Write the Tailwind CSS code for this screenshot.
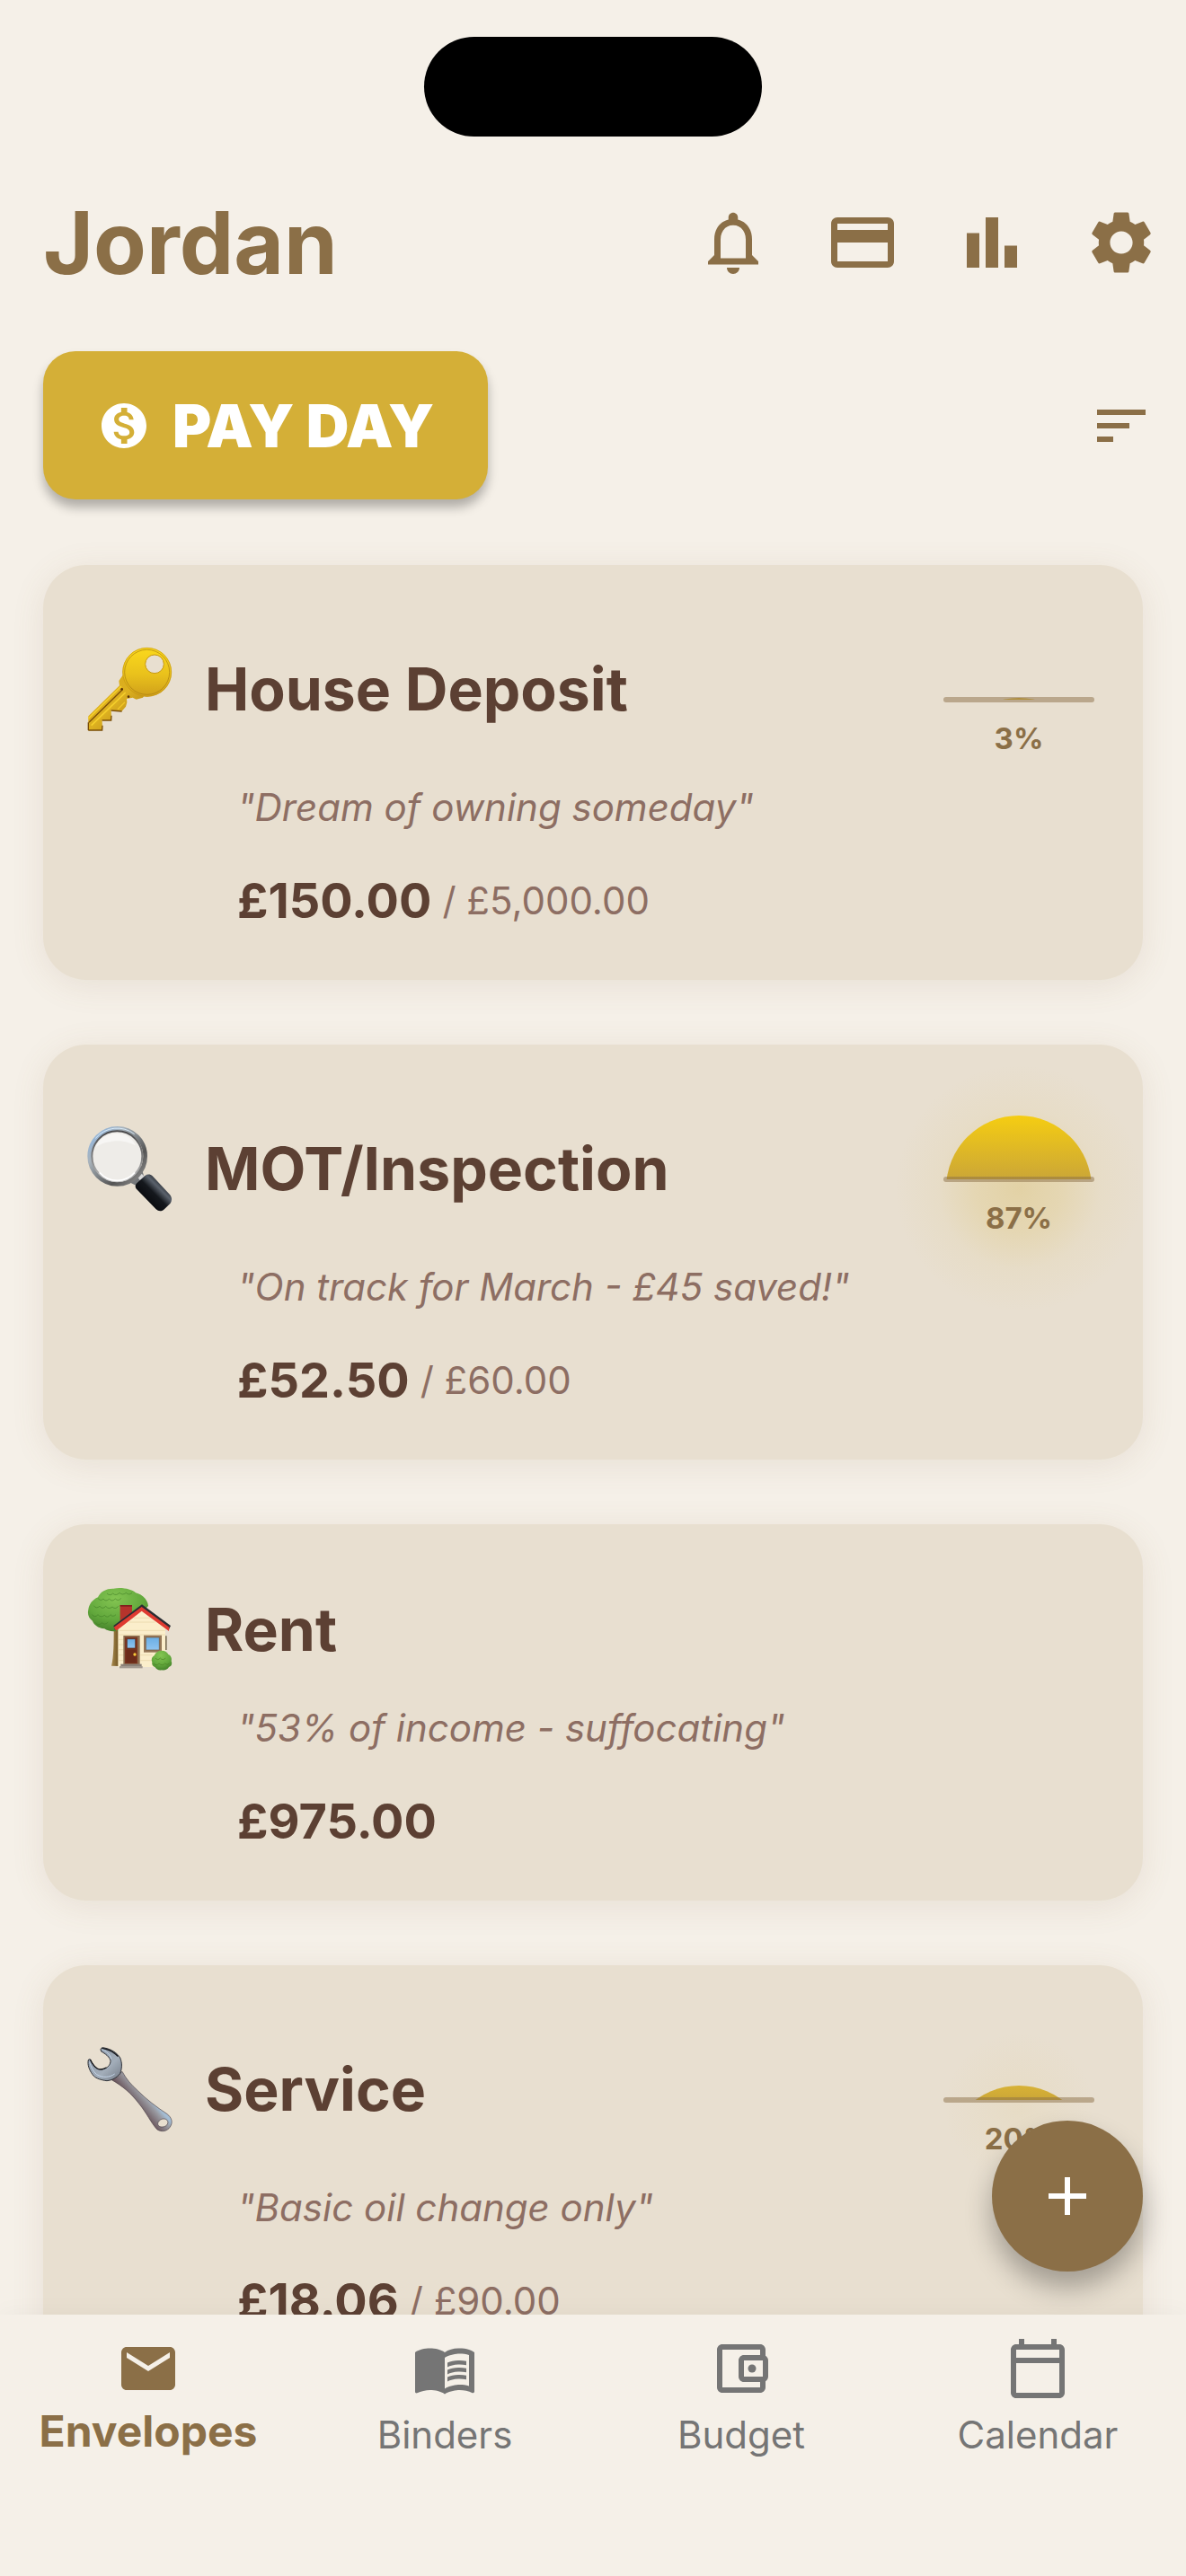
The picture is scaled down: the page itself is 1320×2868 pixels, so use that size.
<!DOCTYPE html>
<html lang="en">
<head>
  <meta charset="UTF-8">
  <meta name="viewport" content="width=device-width, initial-scale=1.0">
  <title>Envelopes</title>
  <script src="https://cdn.jsdelivr.net/npm/@tailwindcss/browser@4"></script>
</head>
<body class="h-screen flex flex-col overflow-hidden bg-[#f5f0e8] font-['Inter',sans-serif] text-[#5c4033]">

  <!-- Scrolling content -->
  <div class="relative flex-1 min-h-0">
    <div class="h-full overflow-hidden pt-[41px]">
      <div class="mx-auto w-[376px] h-[111px] rounded-full bg-black"></div>

      <!-- Header -->
      <header class="mt-[46px] pl-12 flex items-center justify-between text-[#8b6f47]">
        <h1 class="text-[96px] leading-[120px] font-bold">Jordan</h1>
        <div class="flex">
          <button type="button" aria-label="Notifications" class="size-36 flex items-center justify-center">
            <svg class="size-[84px]" viewBox="0 0 24 24" fill="currentColor"><path d="M12 22c1.1 0 2-.9 2-2h-4c0 1.1.9 2 2 2zm6-6v-5c0-3.07-1.63-5.64-4.5-6.32V4c0-.83-.67-1.5-1.5-1.5s-1.5.67-1.5 1.5v.68C7.64 5.36 6 7.92 6 11v5l-2 2v1h16v-1l-2-2zm-2 1H8v-6c0-2.48 1.51-4.5 4-4.5s4 2.02 4 4.5v6z"/></svg>
          </button>
          <button type="button" aria-label="Accounts" class="size-36 flex items-center justify-center">
            <svg class="size-[84px]" viewBox="0 0 24 24" fill="currentColor"><path d="M20 4H4c-1.11 0-1.99.89-1.99 2L2 18c0 1.11.89 2 2 2h16c1.11 0 2-.89 2-2V6c0-1.11-.89-2-2-2zm0 14H4v-6h16v6zm0-10H4V6h16v2z"/></svg>
          </button>
          <button type="button" aria-label="Statistics" class="size-36 flex items-center justify-center">
            <svg class="size-[84px]" viewBox="0 0 24 24" fill="currentColor"><path d="M4 9h4v11H4zm12 4h4v7h-4zm-6-9h4v16h-4z"/></svg>
          </button>
          <button type="button" aria-label="Settings" class="size-36 flex items-center justify-center">
            <svg class="size-[84px]" viewBox="0 0 24 24" fill="currentColor"><path d="M19.14 12.94c.04-.3.06-.61.06-.94 0-.32-.02-.64-.07-.94l2.03-1.58c.18-.14.23-.41.12-.61l-1.92-3.32c-.12-.22-.37-.29-.59-.22l-2.39.96c-.5-.38-1.03-.7-1.62-.94l-.36-2.54c-.04-.24-.24-.41-.48-.41h-3.84c-.24 0-.43.17-.47.41l-.36 2.54c-.59.24-1.13.57-1.62.94l-2.39-.96c-.22-.08-.47 0-.59.22L2.74 8.87c-.12.21-.08.47.12.61l2.03 1.58c-.05.3-.09.63-.09.94s.02.64.07.94l-2.03 1.58c-.18.14-.23.41-.12.61l1.92 3.32c.12.22.37.29.59.22l2.39-.96c.5.38 1.03.7 1.62.94l.36 2.54c.05.24.24.41.48.41h3.84c.24 0 .44-.17.47-.41l.36-2.54c.59-.24 1.13-.56 1.62-.94l2.39.96c.22.08.47 0 .59-.22l1.92-3.32c.12-.22.07-.47-.12-.61l-2.01-1.58zM12 15.6c-1.98 0-3.6-1.62-3.6-3.6s1.62-3.6 3.6-3.6 3.6 1.62 3.6 3.6-1.62 3.6-3.6 3.6z"/></svg>
          </button>
        </div>
      </header>

      <!-- Actions -->
      <div class="mt-[49px] pl-12 flex items-center justify-between">
        <button type="button" class="flex items-center gap-6 h-[165px] px-[60px] rounded-[36px] bg-[#d4af37] text-white text-[66px] leading-[80px] font-black shadow-[0_9px_12px_rgba(0,0,0,0.28)]">
          <svg class="size-[60px]" viewBox="0 0 24 24" fill="currentColor"><path d="M12 2C6.48 2 2 6.48 2 12s4.48 10 10 10 10-4.48 10-10S17.52 2 12 2zm1.41 16.09V20h-2.67v-1.93c-1.71-.36-3.16-1.46-3.27-3.4h1.96c.1 1.05.82 1.87 2.65 1.87 1.96 0 2.4-.98 2.4-1.59 0-.83-.44-1.61-2.67-2.14-2.48-.6-4.18-1.62-4.18-3.67 0-1.72 1.39-2.84 3.11-3.21V4h2.67v1.95c1.86.45 2.79 1.86 2.85 3.39H14.3c-.05-1.11-.64-1.87-2.22-1.87-1.5 0-2.4.68-2.4 1.64 0 .84.65 1.39 2.67 1.94s4.18 1.36 4.18 3.83c-.02 1.81-1.38 2.83-3.12 3.19z"/></svg>
          PAY DAY
        </button>
        <button type="button" aria-label="Sort" class="size-36 flex items-center justify-center text-[#8b6f47]">
          <svg class="size-[72px]" viewBox="0 0 24 24" fill="currentColor"><path d="M3 18h6v-2H3v2zM3 6v2h18V6H3zm0 7h12v-2H3v2z"/></svg>
        </button>
      </div>

      <!-- Envelope list -->
      <ul class="mt-[73px] px-12 flex flex-col gap-[72px]">
        <li class="pt-12 pl-12 pr-[54px] pb-14 rounded-[48px] bg-[#e8dfd0] shadow-[0_6px_36px_rgba(139,111,71,0.12)]">
          <div class="flex items-center gap-9 min-h-[180px]">
            <svg class="size-24" viewBox="81 84 288 288">
              <defs>
                <linearGradient id="keyHead" x1="0" y1="0" x2="0" y2="1"><stop offset="0" stop-color="#fbd91c"/><stop offset=".55" stop-color="#e9c11c"/><stop offset="1" stop-color="#cf9f1a"/></linearGradient>
                <linearGradient id="keyShaft" x1="0" y1="0" x2="1" y2="1"><stop offset="0" stop-color="#d9a818"/><stop offset=".5" stop-color="#dcb020"/><stop offset="1" stop-color="#a87812"/></linearGradient>
              </defs>
              <path fill="url(#keyShaft)" d="M88 319 192 217l-2-16 14-20 70 70-4 6-22 6-12-6-20 4 1 12-4 14-13 15-36-3 1 34h-31l1 33-47 1z"/>
              <path stroke="#7a4d08" stroke-width="4" fill="none" d="m90 340 112-110"/>
              <path stroke="#f5d02c" stroke-width="5" fill="none" d="m88 327 110-108M98 350 212 240"/>
              <path stroke="#7a4d08" stroke-width="4" fill="none" d="M88 366h46l1-16M134 333h30l1-16M164 300l36 3M88 340v26"/>
              <path stroke="#f0c728" stroke-width="4" fill="none" d="m186 296 24-24"/>
              <path fill="url(#keyHead)" fill-rule="evenodd" d="M284 90a82 82 0 1 1 0 164 82 82 0 0 1 0-164zm25 24a31 31 0 1 0 0 62 31 31 0 0 0 0-62z"/>
              <circle cx="284" cy="172" r="75" fill="none" stroke="#a97d10" stroke-width="2"/>
              <circle cx="284" cy="172" r="81" fill="none" stroke="#c3920f" stroke-width="2"/>
              <circle cx="309" cy="145" r="31" fill="none" stroke="#c8980e" stroke-width="3"/>
              <circle cx="200" cy="229" r="4" fill="#5a3205"/><circle cx="222" cy="254" r="4" fill="#5a3205"/>
            </svg>
            <h2 class="flex-1 text-[66px] leading-[80px] font-bold">House Deposit</h2>
            <div class="w-[168px] flex flex-col items-center gap-5">
              <svg class="w-[168px] h-[90px] overflow-visible" viewBox="0 0 168 90">
                <defs><clipPath id="sky3"><path d="M-84-84h336V87H-84z"/></clipPath></defs>
                <circle cx="84" cy="166" r="81" fill="#d4af37" clip-path="url(#sky3)"/>
                <rect y="84" width="168" height="6" rx="3" fill="#8b6f47" fill-opacity=".5"/>
              </svg>
              <span class="text-[33px] leading-[40px] font-bold text-[#8b6f47]">3%</span>
            </div>
          </div>
          <p class="mt-[18px] pl-[168px] text-[42px] leading-[48px] italic text-[#8d6e63]">"Dream of owning someday"</p>
          <p class="mt-12 pl-[168px] flex items-center gap-3 leading-[64px]"><span class="text-[54px] font-bold">£150.00</span><span class="text-[42px] text-[#8d6e63]">/ £5,000.00</span></p>
        </li>

        <li class="pt-12 pl-12 pr-[54px] pb-14 rounded-[48px] bg-[#e8dfd0] shadow-[0_6px_36px_rgba(139,111,71,0.12)]">
          <div class="flex items-center gap-9 min-h-[180px]">
            <svg class="size-24" viewBox="81 95 288 288">
              <defs>
                <linearGradient id="rim" x1="0" y1="0" x2="1" y2="1"><stop offset="0" stop-color="#8ab8ea"/><stop offset=".3" stop-color="#a9b3bb"/><stop offset=".7" stop-color="#555"/><stop offset="1" stop-color="#9a9a9a"/></linearGradient>
                <linearGradient id="rimInner" x1="0" y1="0" x2="0" y2="1"><stop offset="0" stop-color="#4a4a4c"/><stop offset=".6" stop-color="#888"/><stop offset="1" stop-color="#c8c8c8"/></linearGradient>
                <linearGradient id="grip" x1="0" y1="1" x2="1" y2="0"><stop offset=".25" stop-color="#08090d"/><stop offset=".5" stop-color="#15181d"/><stop offset=".64" stop-color="#5b626c"/><stop offset=".8" stop-color="#15171c"/></linearGradient>
              </defs>
              <path fill="#74777a" d="m216 280 48-48 10 34-26 30z"/>
              <path fill="#dadada" d="m254 270 12-14 10 10-14 14z"/>
              <circle cx="185" cy="198" r="93" fill="none" stroke="url(#rim)" stroke-width="14"/>
              <circle cx="184" cy="198" r="84" fill="#eeece8" stroke="url(#rimInner)" stroke-width="6"/>
              <path fill="#f7f6f4" d="M112 168c16-36 44-46 72-46s50 14 62 40c-30-14-52-18-78-14-24 3-40 9-56 20z"/>
              <path fill="none" stroke="#fff" stroke-width="5" d="M125 252a78 78 0 0 0 118 0"/>
              <path fill="none" stroke="#d8eaf8" stroke-width="3" d="M112 138a94 94 0 0 1 130-14"/>
              <path fill="url(#grip)" d="M277 263c8-6 18-6 25 1l58 62c8 10 8 20 2 29l-22 21c-9 7-18 6-26-1l-64-66c-7-7-6-15 0-21z"/>
            </svg>
            <h2 class="flex-1 text-[66px] leading-[80px] font-bold">MOT/Inspection</h2>
            <div class="w-[168px] flex flex-col items-center gap-5">
              <svg class="w-[168px] h-[90px] overflow-visible" viewBox="0 0 168 90">
                <defs>
                  <clipPath id="sky87"><path d="M-84-84h336V87H-84z"/></clipPath>
                  <linearGradient id="sun87" gradientUnits="userSpaceOnUse" x1="0" y1="16" x2="0" y2="87"><stop offset="0" stop-color="#f5cd12"/><stop offset="1" stop-color="#cba637"/></linearGradient>
                  <radialGradient id="glow87"><stop offset="0" stop-color="#d4af37" stop-opacity=".28"/><stop offset=".35" stop-color="#d8b53f" stop-opacity=".2"/><stop offset=".65" stop-color="#d8b53f" stop-opacity=".06"/><stop offset="1" stop-color="#d8b53f" stop-opacity="0"/></radialGradient>
                </defs>
                <circle cx="84" cy="97" r="138" fill="url(#glow87)"/>
                <circle cx="84" cy="97" r="81" fill="url(#sun87)" clip-path="url(#sky87)"/>
                <rect y="84" width="168" height="6" rx="3" fill="#8b6f47" fill-opacity=".5"/>
              </svg>
              <span class="relative text-[33px] leading-[40px] font-bold text-[#8b6f47]">87%</span>
            </div>
          </div>
          <p class="mt-[18px] pl-[168px] text-[42px] leading-[48px] italic text-[#8d6e63]">"On track for March - £45 saved!"</p>
          <p class="mt-12 pl-[168px] flex items-center gap-3 leading-[64px]"><span class="text-[54px] font-bold">£52.50</span><span class="text-[42px] text-[#8d6e63]">/ £60.00</span></p>
        </li>

        <li class="pt-12 pl-12 pr-[54px] pb-14 rounded-[48px] bg-[#e8dfd0] shadow-[0_6px_36px_rgba(139,111,71,0.12)]">
          <div class="flex items-center gap-9 min-h-[137px]">
            <svg class="size-24" viewBox="81 80 288 288">
              <defs>
                <radialGradient id="leaf" cx=".45" cy=".25" r=".8"><stop offset="0" stop-color="#84c552"/><stop offset=".6" stop-color="#62a83c"/><stop offset="1" stop-color="#417d28"/></radialGradient>
                <linearGradient id="trunk"><stop offset="0" stop-color="#a98a4c"/><stop offset="1" stop-color="#6b5020"/></linearGradient>
                <linearGradient id="pane" x1="0" y1="0" x2="0" y2="1"><stop offset="0" stop-color="#6aaee4"/><stop offset="1" stop-color="#8fc4f0"/></linearGradient>
              </defs>
              <path fill="url(#trunk)" d="M173 220h18v127l-26-1c8-30 8-80 8-126z"/>
              <path fill="url(#leaf)" d="M120 117c8-20 30-30 52-29 30-5 60 2 74 14 18 4 40 20 42 44l-64 66c-10 14-26 20-44 18-16 2-30-2-38-8-22-2-36-14-40-26-12-8-18-22-14-38 2-18 14-33 32-41z"/>
              <g fill="none" stroke="#417f27" stroke-width="3" opacity=".6">
                <path d="M120 120q8 12 18 2 8 12 20 0 8 12 20 0 10 10 20-2M106 145q8 12 20 2 10 12 20 0 10 12 22 2 10 10 20-2M100 175q10 12 20 0 10 12 22 2 10 12 20-2 8 10 18 0M112 202q10 12 22 0 8 10 20-2M150 104q10 10 20 0 10 10 22-2 10 10 22 0 10 10 20 0"/>
              </g>
              <path fill="#fbeecb" d="m187 216 79-60 79 62v132H187z"/>
              <path stroke="#e6d3a4" stroke-width="2" d="M190 228h154M190 242h154M188 258h18M188 275h18M188 292h18M188 310h18M188 328h18M262 310h40M262 328h38M225 200h85M240 186h54"/>
              <path fill="#7d7058" d="M345 246h5v47h-5z"/>
              <path fill="#b5342c" d="M194 143h40v32l-40 33z"/><path fill="#7f211d" d="M194 143h40v5h-40z"/>
              <path fill="#2b2d33" d="m172 212 95-71 96 71-6 12-90-66-90 68z"/>
              <path fill="#df3b31" d="m173 217 93-68 92 68-1 13-91-67-85 66z"/>
              <path fill="#8c6f50" d="M205 245h55v97h-55z"/>
              <path fill="#7b3520" d="M210 250h42v89h-42z"/>
              <path fill="#5e2413" d="M214 292h34v44h-34z" opacity=".5"/>
              <path fill="url(#pane)" stroke="#4e2414" stroke-width="2" d="M217 256h28v31h-28z"/>
              <circle cx="243" cy="308" r="5" fill="#f7c93a"/>
              <path fill="#8b8178" d="M196 340h70v7h-70z"/><path fill="#a39a90" d="M192 347h77v7h-77z"/>
              <path fill="#957758" d="M273 244h60v57h-60z"/>
              <path fill="url(#pane)" stroke="#6f543a" stroke-width="2" d="M280 251h45v42h-45z"/>
              <path fill="url(#leaf)" d="M333 295c12 0 18 5 22 13 10 4 12 14 10 22 4 10 0 18-8 20-4 8-14 12-24 10-10 2-18-2-22-9-8-3-12-10-10-18-4-8 0-18 7-21 4-11 13-17 25-17z"/>
              <path fill="none" stroke="#477f22" stroke-width="3" opacity=".6" d="M312 320q8 10 16 0 8 10 18 0M306 338q10 10 18 0 10 10 20 0 8 8 14 0"/>
            </svg>
            <h2 class="flex-1 text-[66px] leading-[80px] font-bold">Rent</h2>
          </div>
          <p class="mt-[18px] pl-[168px] text-[42px] leading-[48px] italic text-[#8d6e63]">"53% of income - suffocating"</p>
          <p class="mt-12 pl-[168px] flex items-center gap-3 leading-[64px]"><span class="text-[54px] font-bold">£975.00</span></p>
        </li>

        <li class="pt-12 pl-12 pr-[54px] pb-14 rounded-[48px] bg-[#e8dfd0] shadow-[0_6px_36px_rgba(139,111,71,0.12)]">
          <div class="flex items-center gap-9 min-h-[180px]">
            <svg class="size-24" viewBox="81 83 288 288">
              <defs>
                <linearGradient id="jaw" x1="0" y1="0" x2="1" y2="1"><stop offset="0" stop-color="#8a96a6"/><stop offset=".6" stop-color="#a2adb9"/><stop offset="1" stop-color="#737b86"/></linearGradient>
                <linearGradient id="arm" gradientUnits="userSpaceOnUse" x1="290" y1="250" x2="250" y2="284"><stop offset="0" stop-color="#a4bdd4"/><stop offset=".3" stop-color="#9a9ba2"/><stop offset="1" stop-color="#6d595f"/></linearGradient>
              </defs>
              <path fill="url(#arm)" stroke="#4b4248" stroke-width="2" fill-rule="evenodd" d="M166 196 201 168c14 26 30 44 52 64 30 30 62 54 98 78 16 12 20 28 10 43-10 16-30 18-44 8-20-22-34-54-60-86-26-34-54-58-91-79zm156 140c-6 10 2 18 14 17 12-1 20-10 17-19-5-12-24-10-31 2z"/>
              <path fill="url(#jaw)" stroke="#2e3036" stroke-width="3" d="M129 94c2-5 6-7 12-5 24 4 44 18 53 33 8 18 6 38 0 53-12 14-26 22-44 24-18-2-36-8-44-16-12-14-20-32-19-47 0-8 3-11 8-8 4 10 10 20 18 27 8 8 20 8 30 3 12-5 19-14 19-26-2-12-18-24-31-31z"/>
              <path fill="none" stroke="#15161a" stroke-width="4" d="M94 128c6 12 14 24 24 30 10 5 20 3 30-3M133 90c22 3 42 14 54 28"/>
              <path fill="none" stroke="#c3d4e6" stroke-width="3" d="M134 94c12 6 28 16 30 32M92 136c4 16 12 32 24 42 20 12 44 10 60-2"/>
            </svg>
            <h2 class="flex-1 text-[66px] leading-[80px] font-bold">Service</h2>
            <div class="w-[168px] flex flex-col items-center gap-5">
              <svg class="w-[168px] h-[90px] overflow-visible" viewBox="0 0 168 90">
                <defs>
                  <clipPath id="sky20"><path d="M-84-84h336V87H-84z"/></clipPath>
                  <linearGradient id="sun20" gradientUnits="userSpaceOnUse" x1="0" y1="71" x2="0" y2="87"><stop offset="0" stop-color="#d8b236"/><stop offset="1" stop-color="#cba637"/></linearGradient>
                  <radialGradient id="glow20"><stop offset="0" stop-color="#d4af37" stop-opacity=".07"/><stop offset="1" stop-color="#d4af37" stop-opacity="0"/></radialGradient>
                </defs>
                <circle cx="84" cy="95" r="84" fill="url(#glow20)"/>
                <circle cx="84" cy="152" r="81" fill="url(#sun20)" clip-path="url(#sky20)"/>
                <rect y="84" width="168" height="6" rx="3" fill="#8b6f47" fill-opacity=".5"/>
              </svg>
              <span class="text-[33px] leading-[40px] font-bold text-[#8b6f47]">20%</span>
            </div>
          </div>
          <p class="mt-[18px] pl-[168px] text-[42px] leading-[48px] italic text-[#8d6e63]">"Basic oil change only"</p>
          <p class="mt-12 pl-[168px] flex items-center gap-3 leading-[64px]"><span class="text-[54px] font-bold">£18.06</span><span class="text-[42px] text-[#8d6e63]">/ £90.00</span></p>
        </li>
      </ul>
    </div>

    <!-- Add button -->
    <button type="button" aria-label="Add envelope" class="absolute right-12 bottom-12 size-[168px] rounded-full bg-[#8b6f47] text-white flex items-center justify-center shadow-[0_18px_30px_rgba(0,0,0,0.3)]">
      <svg class="size-[72px]" viewBox="0 0 24 24" fill="currentColor"><path d="M19 13h-6v6h-2v-6H5v-2h6V5h2v6h6v2z"/></svg>
    </button>
  </div>

  <!-- Bottom navigation -->
  <nav class="relative grid grid-cols-4 pt-6 pb-[125px] bg-[#f5f0e8] text-[42px] leading-[64px] text-[#757575] shadow-[0_-3px_24px_rgba(0,0,0,0.03)]">
    <a href="#envelopes" aria-current="page" class="flex flex-col items-center gap-[6px] text-[#8b6f47] text-[48px] leading-[56px] font-bold">
      <svg class="size-[72px]" viewBox="0 0 24 24" fill="currentColor"><path d="M20 4H4c-1.1 0-1.99.9-1.99 2L2 18c0 1.1.9 2 2 2h16c1.1 0 2-.9 2-2V6c0-1.1-.9-2-2-2zm0 4-8 5-8-5V6l8 5 8-5v2z"/></svg>
      Envelopes
    </a>
    <a href="#binders" class="flex flex-col items-center gap-[6px]">
      <svg class="size-[72px]" viewBox="0 0 24 24" fill="currentColor"><path d="M21 5c-1.11-.35-2.33-.5-3.5-.5-1.95 0-4.05.4-5.5 1.5-1.45-1.1-3.55-1.5-5.5-1.5S2.45 4.9 1 6v14.65c0 .25.25.5.5.5.1 0 .15-.05.25-.05C3.1 20.45 5.05 20 6.5 20c1.95 0 4.05.4 5.5 1.5 1.35-.85 3.8-1.5 5.5-1.5 1.65 0 3.35.3 4.75 1.05.1.05.15.05.25.05.25 0 .5-.25.5-.5V6c-.6-.45-1.25-.75-2-1zm0 13.5c-1.1-.35-2.3-.5-3.5-.5-1.7 0-4.15.65-5.5 1.5V8c1.35-.85 3.8-1.5 5.5-1.5 1.2 0 2.4.15 3.5.5v11.5z"/><path d="M17.5 10.5c.88 0 1.73.09 2.5.26V9.24c-.79-.15-1.64-.24-2.5-.24-1.7 0-3.24.29-4.5.83v1.66c1.13-.64 2.7-.99 4.5-.99zM13 12.49v1.66c1.13-.64 2.7-.99 4.5-.99.88 0 1.73.09 2.5.26V11.9c-.79-.15-1.64-.24-2.5-.24-1.7 0-3.24.3-4.5.83zM17.5 14.33c-1.7 0-3.24.29-4.5.83v1.66c1.13-.64 2.7-.99 4.5-.99.88 0 1.73.09 2.5.26v-1.52c-.79-.16-1.64-.24-2.5-.24z"/></svg>
      Binders
    </a>
    <a href="#budget" class="flex flex-col items-center gap-[6px]">
      <svg class="size-[72px]" viewBox="0 0 24 24" fill="currentColor"><path d="M21 7.28V5c0-1.1-.9-2-2-2H5c-1.11 0-2 .9-2 2v14c0 1.1.89 2 2 2h14c1.1 0 2-.9 2-2v-2.28c.59-.35 1-.98 1-1.72V9c0-.74-.41-1.37-1-1.72zM20 9v6h-7V9h7zM5 19V5h14v2h-6c-1.1 0-2 .9-2 2v6c0 1.1.9 2 2 2h6v2H5z"/><circle cx="16" cy="12" r="1.5"/></svg>
      Budget
    </a>
    <a href="#calendar" class="flex flex-col items-center gap-[6px]">
      <svg class="size-[72px]" viewBox="0 0 24 24" fill="currentColor"><path d="M20 3h-1V1h-2v2H7V1H5v2H4c-1.1 0-2 .9-2 2v16c0 1.1.9 2 2 2h16c1.1 0 2-.9 2-2V5c0-1.1-.9-2-2-2zm0 2v3H4V5h16zM4 21V10h16v11H4z"/></svg>
      Calendar
    </a>
  </nav>
</body>
</html>
